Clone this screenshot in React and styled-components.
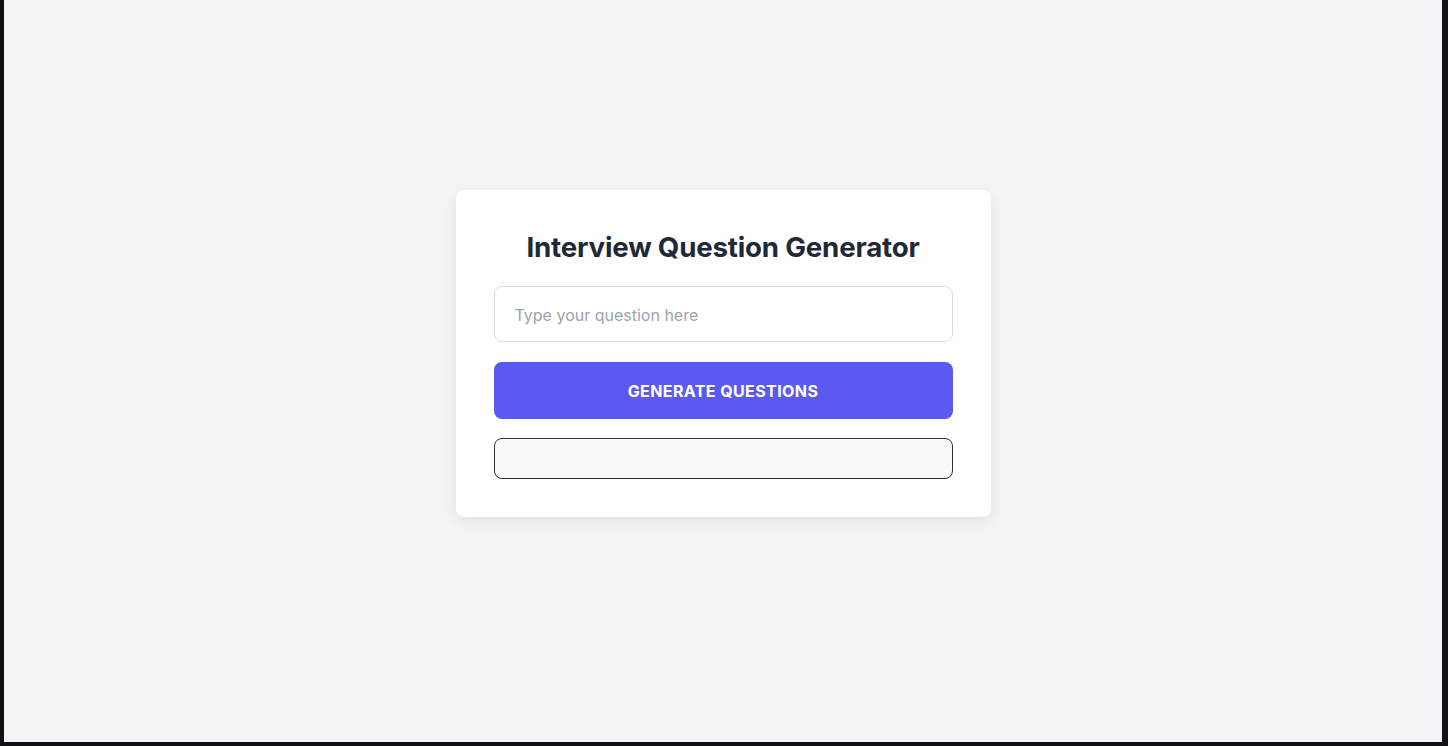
import React, { useState } from "react";
import styled, { createGlobalStyle } from "styled-components";

const Global = createGlobalStyle`
  html, body { margin: 0; padding: 0; height: 100%; }
  body { font-family: Inter, "Noto Sans", sans-serif; }
  #root { height: 100%; }
  * { box-sizing: border-box; }
`;

const Frame = styled.div`
  height: 746px;
  background: #0e1116;
  padding: 0 6px 4px 4px;
  display: flex;
`;

const Page = styled.main`
  flex: 1;
  background: #f3f4f6;
  display: flex;
  align-items: center;
  justify-content: center;
  padding-bottom: 35px;
`;

const Card = styled.section`
  width: 535px;
  background: #ffffff;
  border-radius: 8px;
  padding: 38px;
  box-shadow: 0 4px 14px rgba(0, 0, 0, 0.08);
  display: flex;
  flex-direction: column;
`;

const Title = styled.h1`
  margin: 0 0 20px;
  font-size: 27.7px;
  line-height: 38px;
  font-weight: 700;
  color: #1f2937;
  text-align: center;
  letter-spacing: -0.2px;
`;

const Input = styled.input`
  height: 56px;
  border: 1px solid #d9dce1;
  border-radius: 8px;
  padding: 1px 20px 0;
  font-family: Inter, sans-serif;
  font-size: 16px;
  color: #1f2937;
  outline: none;
  margin-bottom: 20px;
  &::placeholder { color: #9ca3af; }
`;

const Button = styled.button`
  height: 57px;
  border: none;
  border-radius: 8px;
  background: #5c59f0;
  color: #ffffff;
  font-family: Inter, sans-serif;
  font-size: 16px;
  font-weight: 700;
  text-transform: uppercase;
  letter-spacing: 0.4px;
  cursor: pointer;
  margin-bottom: 19px;
`;

const Output = styled.div`
  height: 41px;
  background: #f8f9fb;
  border: 1px solid #2b303a;
  border-radius: 8px;
`;

export default function App() {
  const [q, setQ] = useState("");
  return (
    <>
      <Global />
      <Frame>
        <Page>
          <Card>
            <Title>Interview Question Generator</Title>
            <Input
              placeholder="Type your question here"
              value={q}
              onChange={(e) => setQ(e.target.value)}
            />
            <Button>Generate Questions</Button>
            <Output />
          </Card>
        </Page>
      </Frame>
    </>
  );
}
